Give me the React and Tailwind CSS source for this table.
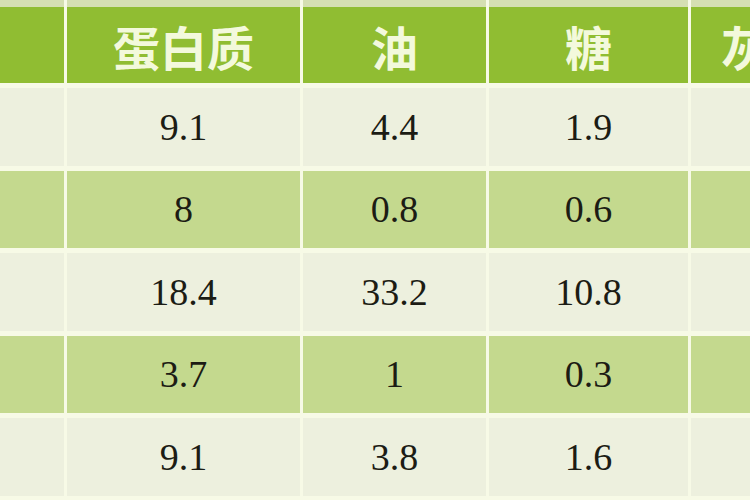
import React from "react";

const rows = [
  ["9.1", "4.4", "1.9"],
  ["8", "0.8", "0.6"],
  ["18.4", "33.2", "10.8"],
  ["3.7", "1", "0.3"],
  ["9.1", "3.8", "1.6"],
];

const grid = "grid grid-cols-[64px_233px_183px_199px_1fr] gap-x-[3px]";

export default function App() {
  return (
    <div className="w-[750px] h-[500px] overflow-hidden bg-[#f7fae6] flex flex-col">
      <div className={`${grid} h-[7px] shrink-0`}>
        <div className="bg-[#d5dfb2]" />
        <div className="bg-[#d5dfb2]" />
        <div className="bg-[#d5dfb2]" />
        <div className="bg-[#d5dfb2]" />
        <div className="bg-[#d5dfb2]" />
      </div>
      <div
        className={`${grid} h-[76px] shrink-0 text-[47px] font-bold text-[#f3f9dc] leading-none`}
        style={{ fontFamily: '"Noto Sans CJK SC", "Noto Sans", sans-serif' }}
      >
        <div className="bg-[#90bd32]" />
        <div className="bg-[#90bd32] flex items-center justify-center">蛋白质</div>
        <div className="bg-[#90bd32] flex items-center justify-center">油</div>
        <div className="bg-[#90bd32] flex items-center justify-center">糖</div>
        <div className="bg-[#90bd32] flex items-center pl-[30px] whitespace-nowrap overflow-hidden">灰分</div>
      </div>
      <div className="flex flex-col gap-y-[5px] mt-[5px]">
        {rows.map((r, i) => {
          const bg = i % 2 === 0 ? "bg-[#edf0de]" : "bg-[#c4d98e]";
          return (
            <div
              key={i}
              className={`${grid} h-[77.5px] shrink-0 text-[38px] text-[#1c1c14] leading-none`}
              style={{ fontFamily: '"Liberation Serif", "Times New Roman", serif' }}
            >
              <div className={bg} />
              <div className={`${bg} flex items-center justify-center`}>{r[0]}</div>
              <div className={`${bg} flex items-center justify-center`}>{r[1]}</div>
              <div className={`${bg} flex items-center justify-center`}>{r[2]}</div>
              <div className={bg} />
            </div>
          );
        })}
      </div>
    </div>
  );
}
